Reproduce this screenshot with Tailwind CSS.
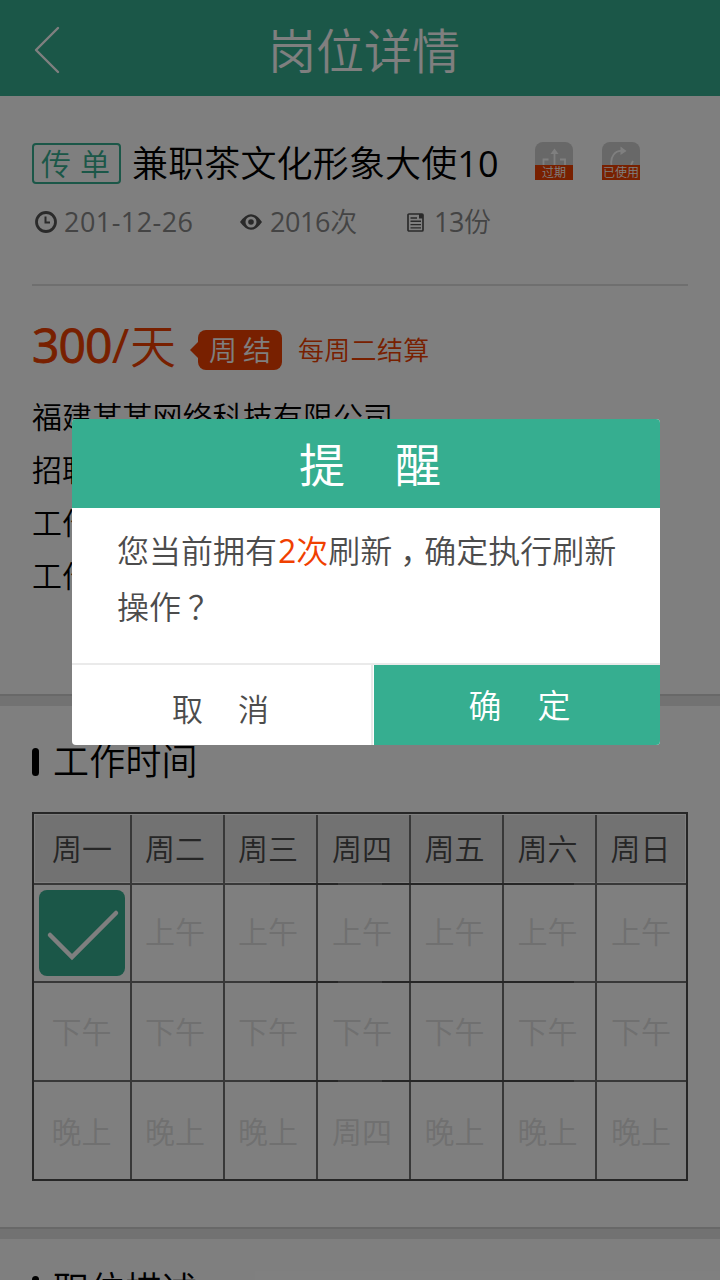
<!DOCTYPE html>
<html lang="zh-CN">
<head>
<meta charset="utf-8">
<title>岗位详情</title>
<script src="https://cdn.jsdelivr.net/npm/@tailwindcss/browser@4"></script>
</head>
<body class="w-[720px] h-[1280px] overflow-hidden bg-white font-[350] text-black font-['Open_Sans','Noto_Sans_CJK_SC',sans-serif] whitespace-nowrap">
<div class="relative w-[720px] h-[1280px] overflow-hidden flex flex-col">
  <header class="h-24 shrink-0 bg-[#36ae90] text-white flex items-center">
    <svg class="ml-[33px] mt-1 w-7 h-12" viewBox="0 0 28 48" fill="none" stroke="currentColor" stroke-width="2.4" stroke-linecap="round" stroke-linejoin="round"><path d="M25 2 3 24l22 22"/></svg>
    <h1 class="ml-[207px] mt-1.5 text-5xl leading-[48px] font-[350]">岗位详情</h1>
  </header>

  <section class="h-[598px] shrink-0 px-8 flex flex-col">
    <div class="mt-[46px] h-[42px] flex items-start">
      <span class="mt-px w-[89px] h-[41px] border-2 border-[#36ae90] rounded text-[#36ae90] text-[30px] leading-[38px] flex justify-center gap-[9px] pr-0.5"><span>传</span><span>单</span></span>
      <h2 class="ml-[11px] w-[403px] text-[36px] leading-[44px] font-[350] tracking-[0.15px]">兼职茶文化形象大使<span class="font-normal">10</span></h2>
      <div class="w-[38px] h-[38px] rounded-t-lg bg-[#d0d0d0] overflow-hidden flex flex-col">
        <svg class="h-[23px] w-[38px]" viewBox="0 0 38 23" fill="none" stroke="#fff" stroke-width="1.800"><path d="M19.500 23V10M13.500 17.500H8.500V23M25 17.500h5V23"/><path d="m15.500 12 4-5.500 4 5.500z" fill="#fff" stroke="none"/></svg>
        <span class="h-[15px] bg-[#f04000] text-white text-xs leading-[15px] text-center">过期</span>
      </div>
      <div class="ml-[29px] w-[38px] h-[38px] rounded-t-lg bg-[#d0d0d0] overflow-hidden flex flex-col">
        <svg class="h-[23px] w-[38px]" viewBox="0 0 38 23" fill="none" stroke="#fff" stroke-width="1.800"><path d="M9.500 23C8 15 13 8.500 20 9M31 19l-2 4"/><path d="m18.500 4.500 6 4.500-6 4z" fill="#fff" stroke="none"/></svg>
        <span class="h-[15px] bg-[#f04000] text-white text-xs leading-[15px] text-center">已使用</span>
      </div>
    </div>
    <div class="mt-[18px] h-10 flex items-center text-[#888] text-[27px] leading-10">
      <svg class="ml-[3px] w-[22px] h-[22px]" viewBox="0 0 22 22" fill="none" stroke="#555"><circle cx="11" cy="11" r="9.500" stroke-width="2.800"/><path d="M10.500 5.500V11.500H15" stroke-width="2"/></svg>
      <span class="ml-[7px] w-[176px] font-normal tracking-[0.45px]">201-12-26</span>
      <svg class="w-[22px] h-4" viewBox="0 0 22 16"><path fill="#555" fill-rule="evenodd" d="M0 8Q11-7.500 22 8 11 23.500 0 8ZM11 2.500a5.500 5.500 0 1 0 0 11 5.500 5.500 0 0 0 0-11Z"/><circle cx="11" cy="8" r="2.800" fill="#555"/></svg>
      <span class="ml-2 w-[137px] tracking-[-0.4px]"><span class="font-normal">2016</span>次</span>
      <svg class="w-[17px] h-[19px]" viewBox="0 0 17 19" fill="none" stroke="#555" stroke-width="1.700"><rect x="1" y="1" width="15" height="17" rx="1"/><path d="M12 1h4v4.500h-4z" fill="#555" stroke="none"/><path d="M3.500 5H10M3.500 8.300h10.500M3.500 11.600h10.500M3.500 14.900h10.500" stroke-width="1.400"/></svg>
      <span class="ml-[10px] tracking-[-0.4px]"><span class="font-normal">13</span>份</span>
    </div>
    <div class="mt-[42px] h-0.5 shrink-0 bg-[#dedede]"></div>
    <div class="mt-8 h-16 shrink-0 flex items-center text-[#f04000]">
      <div class="w-[158px] text-[48px] leading-[64px] -mt-2.5"><span class="font-normal tracking-[-0.900px] [-webkit-text-stroke:0.900px_#f04000]">300</span><span class="font-normal tracking-[0.8px]">/</span><span class="text-[46px]">天</span></div>
      <svg class="w-2 h-4" viewBox="0 0 8 16"><path fill="#f04000" d="M8 0v16L0 8z"/></svg>
      <span class="w-[84px] h-10 rounded-lg bg-[#f04000] text-white text-[28px] leading-[40px] flex justify-center gap-[6px]"><span>周</span><span>结</span></span>
      <span class="ml-4 text-[26px] leading-10 tracking-[0.300px]">每周二结算</span>
    </div>
    <div class="mt-2 text-[30px] leading-[53px] tracking-[0.1px]">
      <p>福建某某网络科技有限公司</p>
      <p>招聘</p>
      <p>工作</p>
      <p>工作</p>
    </div>
  </section>

  <div class="h-3 shrink-0 border-t-2 border-[#d0d0d0] bg-[#e4e4e4]"></div>

  <section class="h-[521px] shrink-0 px-8">
    <h3 class="pt-8 flex items-center text-[36px] leading-[48px] font-[350] tracking-[0.2px]"><i class="w-[7px] h-7 rounded-full bg-black mr-[14px]"></i>工作时间</h3>
    <div class="mt-[26px] h-[369px] border-2 border-[#4c4c4c] flex flex-col text-[30px] text-center text-[#e0e0e0]" id="schedule"></div>
  </section>

  <div class="h-3 shrink-0 border-t-2 border-[#d0d0d0] bg-[#e4e4e4]"></div>
  <section class="px-8">
    <h3 class="pt-[27px] flex items-center text-[36px] leading-[48px] font-[350] tracking-[0.2px]"><i class="w-[7px] h-7 rounded-full bg-black mr-[14px]"></i><span>职位描述</span></h3>
  </section>

  <div class="absolute inset-0 bg-black/50">
    <div class="mt-[419px] ml-[72px] w-[588px] h-[326px] rounded-[4px] overflow-hidden bg-white flex flex-col text-[#4c4c4c]">
      <div class="h-[89px] bg-[#36ae90] text-white text-[46px] leading-[90px] flex justify-center gap-[50px] pl-2 font-normal"><span>提</span><span>醒</span></div>
      <div class="h-[155px] pl-[45px] pt-[15px] text-[32px] leading-[56px]">
        <p>您当前拥有<span class="text-[#f04000] ml-px"><span class="font-normal">2</span>次</span>刷新<span class="inline-block w-8 pl-2">，</span>确定执行刷新</p>
        <p>操作<span class="inline-block pl-[7px]">？</span></p>
      </div>
      <div class="h-[82px] border-t-2 border-[#eaeaea] flex leading-[80px]">
        <div class="w-[299px] pt-1 pr-0.5 text-[31px] flex justify-center gap-[35px]"><span>取</span><span>消</span></div>
        <div class="w-0.5 bg-[#eaeaea]"></div>
        <div class="ml-px w-[286px] pl-[5px] pt-px bg-[#36ae90] text-white text-[33px] flex justify-center gap-[36px]"><span>确</span><span>定</span></div>
      </div>
    </div>
  </div>
</div>
<script>
const rows = [
  ['周一','周二','周三','周四','周五','周六','周日'],
  ['✓','上午','上午','上午','上午','上午','上午'],
  ['下午','下午','下午','下午','下午','下午','下午'],
  ['晚上','晚上','晚上','周四','晚上','晚上','晚上']
];
const rowStyle = [
  'h-[69px] leading-[68px] grid-cols-[97px_93px_93px_93px_93px_93px_88px] bg-[#e4e4e4] text-[#4c4c4c] border border-white',
  'h-[96px] leading-[94px] grid-rows-[96px] grid-cols-[98px_93px_93px_93px_93px_93px_89px]',
  'h-[97px] leading-[98px] grid-rows-[97px] grid-cols-[98px_93px_93px_93px_93px_93px_89px]',
  'h-[97px] leading-[100px] grid-rows-[97px] grid-cols-[98px_93px_93px_93px_93px_93px_89px]'
];
const cellPad = ['pr-px', 'pr-[5px]', 'pr-[5px]', 'pr-[3px]', 'pr-[4px]', 'pr-[4px]', 'pr-px'];
const check = '<svg class="w-[86px] h-[86px] ml-[5px] mt-[5px]" viewBox="0 0 86 86"><rect width="86" height="86" rx="8" fill="#36ae90"/><path d="M11 45 33 67 77 23" fill="none" stroke="#fff" stroke-width="4.500" stroke-linecap="round"/></svg>';
document.getElementById('schedule').innerHTML = rows.map((r, i) =>
  (i ? '<div class="h-0.5 shrink-0 bg-[#707070] flex"><b class="ml-[236px] w-[68px] bg-[#4c4c4c]"></b><b class="ml-[44px] w-[192px] bg-[#4c4c4c]"></b></div>' : '') +
  '<div class="shrink-0 grid ' + rowStyle[i] + '">' +
  r.map((t, j) => '<div class="' + (j < 6 ? 'border-r-2 border-[#707070] ' : '') + cellPad[j] + '">' + (t === '✓' ? check : t) + '</div>').join('') + '</div>'
).join('');
</script>
</body>
</html>
